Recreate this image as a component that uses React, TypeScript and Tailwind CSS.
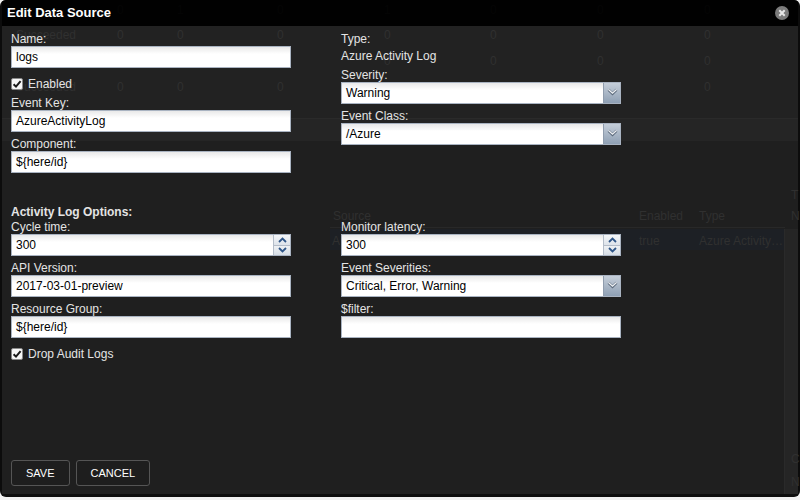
import React from "react";

const Label = ({ children, className = "" }: { children: React.ReactNode; className?: string }) => (
  <div className={`h-[14px] leading-[14px] text-[12px] text-[#e4e4e4] whitespace-nowrap ${className}`}>{children}</div>
);

const TextBox = ({ value, children }: { value?: string; children?: React.ReactNode }) => (
  <div className="relative flex h-[22px] w-[280px] items-center border border-[#a9b3c1] bg-linear-to-b from-[#e9e9e9] via-white via-[35%] to-white">
    <div className="flex-1 truncate pl-[4px] text-[12px] leading-[20px] text-black">{value}</div>
    {children}
  </div>
);

const Spinner = () => (
  <div className="flex h-full w-[17px] flex-col border-l border-[#b4bdc9]">
    <div className="flex flex-1 items-center justify-center border-b border-[#b4bdc9] bg-linear-to-b from-[#f4f6f8] to-[#dde3ea]">
      <svg width="9" height="6" viewBox="0 0 9 6">
        <path d="M1 5 L4.5 1.5 L8 5" fill="none" stroke="#2f5688" strokeWidth="1.8" />
      </svg>
    </div>
    <div className="flex flex-1 items-center justify-center bg-linear-to-b from-[#eef1f4] to-[#d6dde5]">
      <svg width="9" height="6" viewBox="0 0 9 6">
        <path d="M1 1 L4.5 4.5 L8 1" fill="none" stroke="#2f5688" strokeWidth="1.8" />
      </svg>
    </div>
  </div>
);

const SelectArrow = () => (
  <div className="flex h-full w-[17px] items-center justify-center border-l border-[#8f9cad] bg-linear-to-b from-[#c5ced9] to-[#8fa0b4]">
    <svg width="11" height="8" viewBox="0 0 11 8" className="-mt-[3px]">
      <path d="M1.5 1.8 L5.5 5.6 L9.5 1.8" fill="none" stroke="#5c6a7c" strokeWidth="2.6" />
      <path d="M1.5 1.5 L5.5 5.2 L9.5 1.5" fill="none" stroke="#eef1f4" strokeWidth="1.3" />
    </svg>
  </div>
);

const Check = () => (
  <svg width="12" height="12" viewBox="0 0 12 12">
    <rect x="0.5" y="0.5" width="11" height="11" rx="1.5" fill="#f7f7f7" stroke="#8a8a8a" />
    <path d="M2.6 6.2 L5 8.6 L9.6 3.2" fill="none" stroke="#1a1a1a" strokeWidth="2" />
  </svg>
);

const Ghost = ({ x, y, children, className = "" }: { x: number; y: number; children: React.ReactNode; className?: string }) => (
  <div className={`absolute text-[12px] leading-[14px] text-[#303030] whitespace-nowrap ${className}`} style={{ left: x, top: y }}>
    {children}
  </div>
);

export default function App() {
  const zeroCols = [117, 177, 277, 384, 490, 597, 704];
  return (
    <div className="relative h-[500px] w-[800px] overflow-hidden bg-[#f0f0f0] font-['Liberation_Sans',Arial,sans-serif]">
      <div className="relative flex h-[497px] w-[800px] flex-col overflow-hidden rounded-[6px] bg-[#0c0c0c] px-[2px] pb-[3px]">
        {/* ghost background content seen through the dialog */}
        <div className="pointer-events-none absolute left-[2px] right-[2px] top-[26px] bottom-[3px] rounded-b-[4px] bg-[#222222]">
          <div className="absolute left-0 right-0 top-[92px] h-[23px] border-t border-[#2a2a2a] bg-[#252525]" />
          <div className="absolute left-0 right-0 top-[115px] bottom-0 bg-[#1f1f1f]" />
          <div className="absolute left-[328px] right-[13px] top-[179px] h-[23px] border-b border-[#282828]" />
          <div className="absolute left-[328px] right-[13px] top-[203px] h-[21px] bg-[#1d2025]" />
          <div className="absolute right-[13px] top-[203px] bottom-0 w-px bg-[#2a2a2a]" />
          <div className="absolute right-0 top-[203px] bottom-0 w-[13px] bg-[#252525]" />
        </div>
        <div className="pointer-events-none absolute inset-0">
          <Ghost x={16} y={28}>Succeeded</Ghost>
          <Ghost x={16} y={80}>Succeeded</Ghost>
          {[3, 28, 54, 80].map((y) =>
            zeroCols.map((x, i) => (
              <Ghost key={`${y}-${x}`} x={x} y={y} className={y === 3 ? "text-[#1c1c1c]" : ""}>
                {y === 3 && (i === 1 || i === 3) ? "1" : "0"}
              </Ghost>
            ))
          )}
          <Ghost x={333} y={209}>Source</Ghost>
          <Ghost x={639} y={209}>Enabled</Ghost>
          <Ghost x={699} y={209}>Type</Ghost>
          <Ghost x={791} y={209}>N</Ghost>
          <Ghost x={332} y={234} className="text-[#33373d]">A</Ghost>
          <Ghost x={639} y={234} className="text-[#33373d]">true</Ghost>
          <Ghost x={699} y={234} className="text-[#33373d]">Azure Activity…</Ghost>
          <Ghost x={791} y={188}>T</Ghost>
          <Ghost x={791} y={452}>C</Ghost>
          <Ghost x={791} y={475}>N</Ghost>
        </div>

        {/* title bar */}
        <div className="relative z-10 flex h-[26px] shrink-0 items-center justify-between bg-black/90 pl-[5px] pr-[9px]">
          <span className="text-[13px] font-bold text-white">Edit Data Source</span>
          <svg width="14" height="14" viewBox="0 0 14 14">
            <circle cx="7" cy="7" r="7" fill="#7b7b7b" />
            <path d="M4.3 4.3 L9.7 9.7 M9.7 4.3 L4.3 9.7" stroke="#e8e8e8" strokeWidth="2" />
          </svg>
        </div>

        {/* body */}
        <div className="relative z-10 flex flex-1 flex-col pl-[9px] pt-[6px] pb-[8px]">
          <div className="flex gap-[50px]">
            <div className="flex w-[280px] flex-col">
              <Label>Name:</Label>
              <TextBox value="logs" />
              <div className="mt-[7px] flex h-[18px] items-center gap-[5px]">
                <Check />
                <span className="text-[12px] text-[#e4e4e4]">Enabled</span>
              </div>
              <Label className="mt-[3px]">Event Key:</Label>
              <TextBox value="AzureActivityLog" />
              <Label className="mt-[5px]">Component:</Label>
              <TextBox value="${here/id}" />
            </div>
            <div className="flex w-[280px] flex-col">
              <Label>Type:</Label>
              <Label className="mt-[3px]">Azure Activity Log</Label>
              <Label className="mt-[5px]">Severity:</Label>
              <TextBox value="Warning">
                <SelectArrow />
              </TextBox>
              <Label className="mt-[5px]">Event Class:</Label>
              <TextBox value="/Azure">
                <SelectArrow />
              </TextBox>
            </div>
          </div>

          <div className="mt-[32px] h-[14px] text-[12px] font-bold leading-[14px] text-[#e4e4e4]">Activity Log Options:</div>
          <div className="mt-[1px] flex gap-[50px]">
            <div className="flex w-[280px] flex-col">
              <Label>Cycle time:</Label>
              <TextBox value="300">
                <Spinner />
              </TextBox>
              <Label className="mt-[5px]">API Version:</Label>
              <TextBox value="2017-03-01-preview" />
              <Label className="mt-[5px]">Resource Group:</Label>
              <TextBox value="${here/id}" />
              <div className="mt-[6px] flex h-[20px] items-center gap-[5px]">
                <Check />
                <span className="text-[12px] text-[#e4e4e4]">Drop Audit Logs</span>
              </div>
            </div>
            <div className="flex w-[280px] flex-col">
              <Label>Monitor latency:</Label>
              <TextBox value="300">
                <Spinner />
              </TextBox>
              <Label className="mt-[5px]">Event Severities:</Label>
              <TextBox value="Critical, Error, Warning">
                <SelectArrow />
              </TextBox>
              <Label className="mt-[5px]">$filter:</Label>
              <TextBox value="" />
            </div>
          </div>

          <div className="flex-1" />
          <div className="flex gap-[6px]">
            <button className="h-[26px] rounded-[3px] border border-[#555] bg-[#1e1e1e] px-[14px] text-[11px] text-white">SAVE</button>
            <button className="h-[26px] rounded-[3px] border border-[#555] bg-[#1e1e1e] px-[14px] text-[11px] text-white">CANCEL</button>
          </div>
        </div>
      </div>
    </div>
  );
}
